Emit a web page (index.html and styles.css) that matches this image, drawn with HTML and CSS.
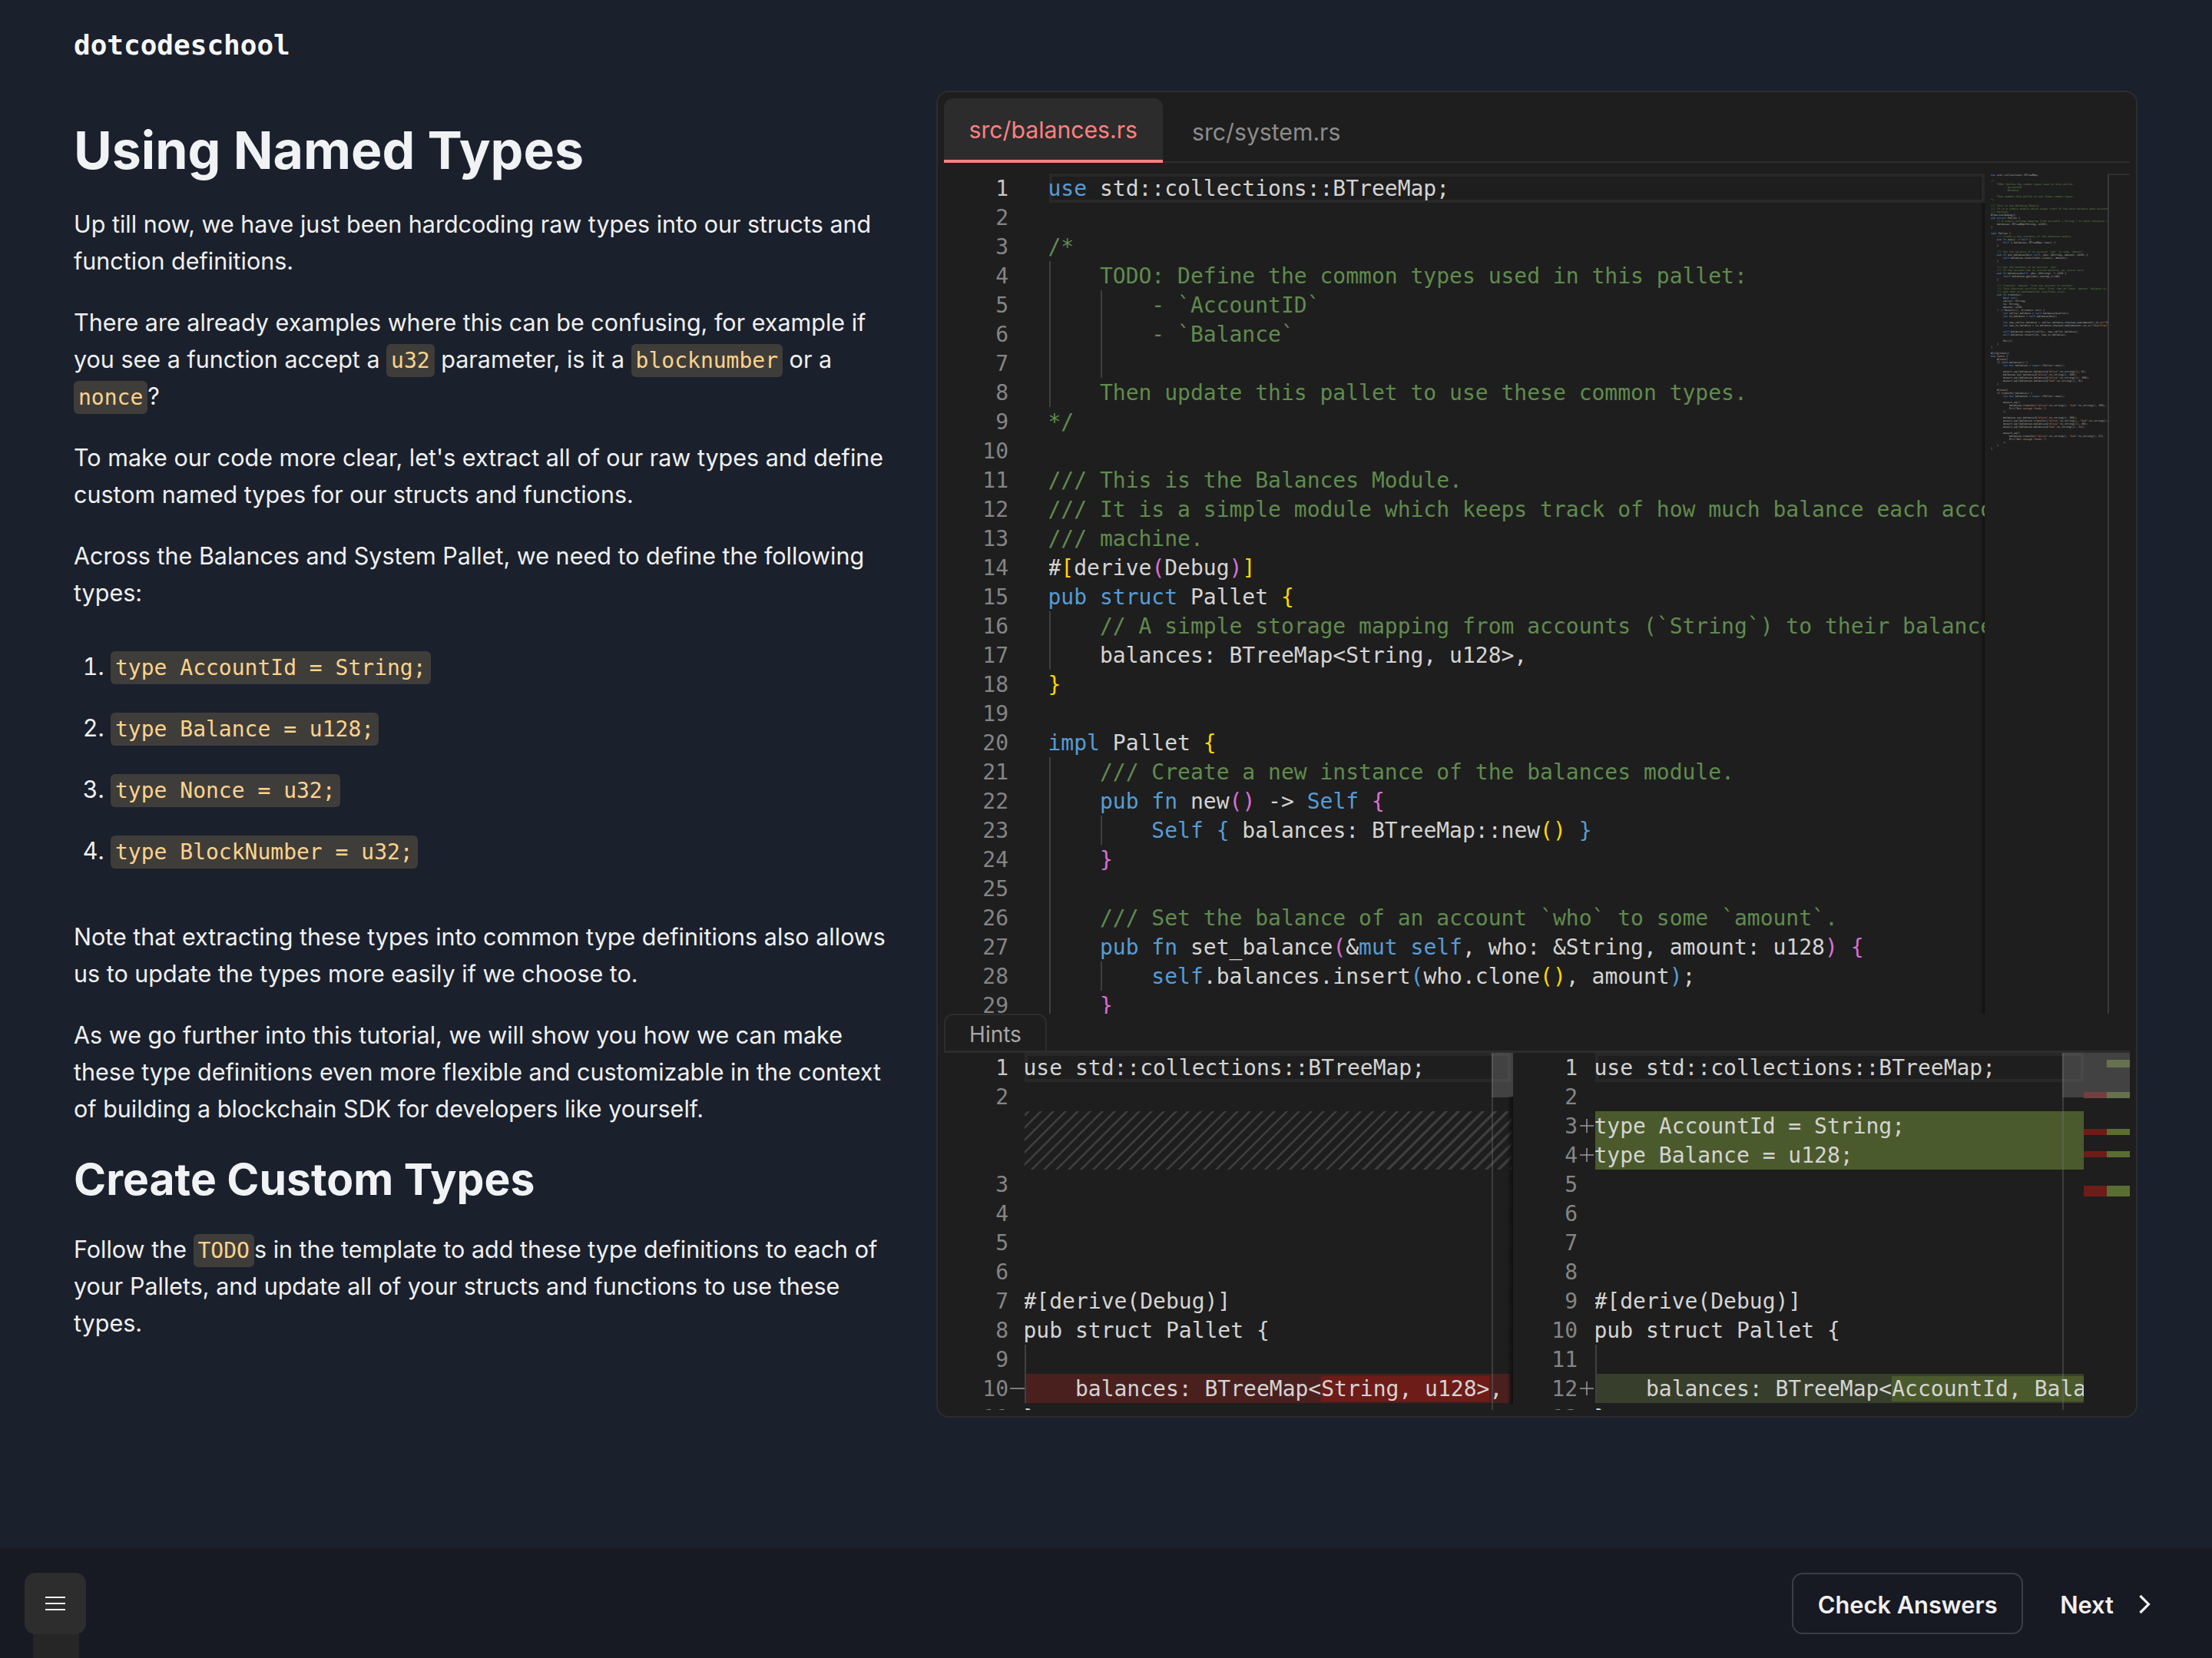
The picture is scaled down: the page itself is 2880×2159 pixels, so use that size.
FILE: index.html
```html
<!DOCTYPE html>
<html lang="en">
<head>
<meta charset="utf-8">
<title>Using Named Types</title>
<link rel="stylesheet" href="styles.css">
</head>
<body>
<div class="page">
  <main class="main">
    <article class="lesson">
      <div class="logo">dotcodeschool</div>
      <h1>Using Named Types</h1>
      <p>Up till now, we have just been hardcoding raw types into our structs and function definitions.</p>
      <p>There are already examples where this can be confusing, for example if you see a function accept a <code>u32</code> parameter, is it a <code>blocknumber</code> or a <code>nonce</code>?</p>
      <p>To make our code more clear, let's extract all of our raw types and define custom named types for our structs and functions.</p>
      <p>Across the Balances and System Pallet, we need to define the following types:</p>
      <ol>
        <li><code>type AccountId = String;</code></li>
        <li><code>type Balance = u128;</code></li>
        <li><code>type Nonce = u32;</code></li>
        <li><code>type BlockNumber = u32;</code></li>
      </ol>
      <p>Note that extracting these types into common type definitions also allows us to update the types more easily if we choose to.</p>
      <p>As we go further into this tutorial, we will show you how we can make these type definitions even more flexible and customizable in the context of building a blockchain SDK for developers like yourself.</p>
      <h2>Create Custom Types</h2>
      <p>Follow the <code>TODO</code>s in the template to add these type definitions to each of your Pallets, and update all of your structs and functions to use these types.</p>
    </article>

    <section class="panel">
      <div class="tabs">
        <div class="tab active">src/balances.rs</div>
        <div class="tab">src/system.rs</div>
      </div>
      <div class="editor">
        <div class="lines">
          <div class="ln current"><span class="num">1</span><span class="code"><i class="k">use</i> std::collections::BTreeMap;</span></div>
          <div class="ln"><span class="num">2</span><span class="code"></span></div>
          <div class="ln"><span class="num">3</span><span class="code c">/*</span></div>
          <div class="ln"><span class="num">4</span><span class="code c g1">    TODO: Define the common types used in this pallet:</span></div>
          <div class="ln"><span class="num">5</span><span class="code c g12">        - `AccountID`</span></div>
          <div class="ln"><span class="num">6</span><span class="code c g12">        - `Balance`</span></div>
          <div class="ln"><span class="num">7</span><span class="code c g12"></span></div>
          <div class="ln"><span class="num">8</span><span class="code c g1">    Then update this pallet to use these common types.</span></div>
          <div class="ln"><span class="num">9</span><span class="code c">*/</span></div>
          <div class="ln"><span class="num">10</span><span class="code"></span></div>
          <div class="ln"><span class="num">11</span><span class="code c">/// This is the Balances Module.</span></div>
          <div class="ln"><span class="num">12</span><span class="code c">/// It is a simple module which keeps track of how much balance each account has in this state</span></div>
          <div class="ln"><span class="num">13</span><span class="code c">/// machine.</span></div>
          <div class="ln"><span class="num">14</span><span class="code">#<i class="y">[</i>derive<i class="p">(</i>Debug<i class="p">)</i><i class="y">]</i></span></div>
          <div class="ln"><span class="num">15</span><span class="code"><i class="k">pub struct</i> Pallet <i class="y">{</i></span></div>
          <div class="ln"><span class="num">16</span><span class="code c g1">    // A simple storage mapping from accounts (`String`) to their balances (`u128`).</span></div>
          <div class="ln"><span class="num">17</span><span class="code g1">    balances: BTreeMap&lt;String, u128&gt;,</span></div>
          <div class="ln"><span class="num">18</span><span class="code"><i class="y">}</i></span></div>
          <div class="ln"><span class="num">19</span><span class="code"></span></div>
          <div class="ln"><span class="num">20</span><span class="code"><i class="k">impl</i> Pallet <i class="y">{</i></span></div>
          <div class="ln"><span class="num">21</span><span class="code c g1">    /// Create a new instance of the balances module.</span></div>
          <div class="ln"><span class="num">22</span><span class="code g1">    <i class="k">pub fn</i> new<i class="p">()</i> -&gt; <i class="k">Self</i> <i class="p">{</i></span></div>
          <div class="ln"><span class="num">23</span><span class="code g12">        <i class="k">Self</i> <i class="b">{</i> balances: BTreeMap::new<i class="y">()</i> <i class="b">}</i></span></div>
          <div class="ln"><span class="num">24</span><span class="code g1">    <i class="p">}</i></span></div>
          <div class="ln"><span class="num">25</span><span class="code g1"></span></div>
          <div class="ln"><span class="num">26</span><span class="code c g1">    /// Set the balance of an account `who` to some `amount`.</span></div>
          <div class="ln"><span class="num">27</span><span class="code g1">    <i class="k">pub fn</i> set_balance<i class="p">(</i>&amp;<i class="k">mut self</i>, who: &amp;String, amount: u128<i class="p">)</i> <i class="p">{</i></span></div>
          <div class="ln"><span class="num">28</span><span class="code g12">        <i class="k">self</i>.balances.insert<i class="b">(</i>who.clone<i class="y">()</i>, amount<i class="b">)</i>;</span></div>
          <div class="ln"><span class="num">29</span><span class="code g1">    <i class="p">}</i></span></div>
        </div>
        <pre class="minimap"><i class="k">use</i> std::collections::BTreeMap;

<i class="c">/*
    TODO: Define the common types used in this pallet:
        - `AccountID`
        - `Balance`

    Then update this pallet to use these common types.
*/

/// This is the Balances Module.
/// It is a simple module which keeps track of how much balance each account has in this state
/// machine.</i>
#[derive(Debug)]
<i class="k">pub struct</i> Pallet {
    <i class="c">// A simple storage mapping from accounts (`String`) to their balances (`u128`).</i>
    balances: BTreeMap&lt;String, u128&gt;,
}

<i class="k">impl</i> Pallet {
    <i class="c">/// Create a new instance of the balances module.</i>
    <i class="k">pub fn</i> new() -&gt; <i class="k">Self</i> {
        <i class="k">Self</i> { balances: BTreeMap::new() }
    }

    <i class="c">/// Set the balance of an account `who` to some `amount`.</i>
    <i class="k">pub fn</i> set_balance(&amp;<i class="k">mut self</i>, who: &amp;String, amount: u128) {
        <i class="k">self</i>.balances.insert(who.clone(), amount);
    }

    <i class="c">/// Get the balance of an account `who`.
    /// If the account has no stored balance, we return zero.</i>
    <i class="k">pub fn</i> balance(&amp;<i class="k">self</i>, who: &amp;String) -&gt; u128 {
        *<i class="k">self</i>.balances.get(who).unwrap_or(&amp;0)
    }

    <i class="c">/// Transfer `amount` from one account to another.
    /// This function verifies that `from` has at least `amount` balance to transfer,
    /// and that no mathematical overflows occur.</i>
    <i class="k">pub fn</i> transfer(
        &amp;<i class="k">mut self</i>,
        caller: String,
        to: String,
        amount: u128,
    ) -&gt; Result&lt;(), &amp;'static str&gt; {
        <i class="k">let</i> caller_balance = <i class="k">self</i>.balance(&amp;caller);
        <i class="k">let</i> to_balance = <i class="k">self</i>.balance(&amp;to);

        <i class="k">let</i> new_caller_balance = caller_balance.checked_sub(amount).ok_or(<i class="s">"Not enough funds."</i>)?;
        <i class="k">let</i> new_to_balance = to_balance.checked_add(amount).ok_or(<i class="s">"Overflow"</i>)?;

        <i class="k">self</i>.balances.insert(caller, new_caller_balance);
        <i class="k">self</i>.balances.insert(to, new_to_balance);

        Ok(())
    }
}

#[cfg(test)]
<i class="k">mod</i> tests {
    #[test]
    <i class="k">fn</i> init_balances() {
        <i class="k">let mut</i> balances = <i class="k">super</i>::Pallet::new();

        assert_eq!(balances.balance(&amp;<i class="s">"alice"</i>.to_string()), 0);
        balances.set_balance(&amp;<i class="s">"alice"</i>.to_string(), 100);
        assert_eq!(balances.balance(&amp;<i class="s">"alice"</i>.to_string()), 100);
        assert_eq!(balances.balance(&amp;<i class="s">"bob"</i>.to_string()), 0);
    }

    #[test]
    <i class="k">fn</i> transfer_balance() {
        <i class="k">let mut</i> balances = <i class="k">super</i>::Pallet::new();

        assert_eq!(
            balances.transfer(<i class="s">"alice"</i>.to_string(), <i class="s">"bob"</i>.to_string(), 100),
            Err(<i class="s">"Not enough funds."</i>)
        );

        balances.set_balance(&amp;<i class="s">"alice"</i>.to_string(), 100);
        assert_eq!(balances.transfer(<i class="s">"alice"</i>.to_string(), <i class="s">"bob"</i>.to_string(), 51), Ok(()));
        assert_eq!(balances.balance(&amp;<i class="s">"alice"</i>.to_string()), 49);
        assert_eq!(balances.balance(&amp;<i class="s">"bob"</i>.to_string()), 51);

        assert_eq!(
            balances.transfer(<i class="s">"alice"</i>.to_string(), <i class="s">"bob"</i>.to_string(), 51),
            Err(<i class="s">"Not enough funds."</i>)
        );
    }
}</pre>
        <div class="ruler"></div>
      </div>

      <div class="hints-bar"><div class="hints-tab">Hints</div></div>

      <div class="diff">
        <div class="pane pane-left">
          <div class="ln current"><span class="num">1</span><span class="sign"></span><span class="code">use std::collections::BTreeMap;</span></div>
          <div class="ln"><span class="num">2</span><span class="sign"></span><span class="code"></span></div>
          <div class="hatch"></div>
          <div class="ln"><span class="num">3</span><span class="sign"></span><span class="code"></span></div>
          <div class="ln"><span class="num">4</span><span class="sign"></span><span class="code"></span></div>
          <div class="ln"><span class="num">5</span><span class="sign"></span><span class="code"></span></div>
          <div class="ln"><span class="num">6</span><span class="sign"></span><span class="code"></span></div>
          <div class="ln"><span class="num">7</span><span class="sign"></span><span class="code">#[derive(Debug)]</span></div>
          <div class="ln"><span class="num">8</span><span class="sign"></span><span class="code">pub struct Pallet {</span></div>
          <div class="ln"><span class="num">9</span><span class="sign"></span><span class="code g1"></span></div>
          <div class="ln"><span class="num">10</span><span class="sign"><svg viewBox="0 0 22 22" class="mark"><path d="M2 11H22"/></svg></span><span class="code del g1">    balances: BTreeMap&lt;<b class="del-w">String, u128&gt;</b>,</span></div>
          <div class="ln"><span class="num">11</span><span class="sign"></span><span class="code">}</span></div>
          <div class="slider"></div>
          <div class="edge"></div>
        </div>
        <div class="pane pane-right">
          <div class="ln current"><span class="num">1</span><span class="sign"></span><span class="code">use std::collections::BTreeMap;</span></div>
          <div class="ln"><span class="num">2</span><span class="sign"></span><span class="code"></span></div>
          <div class="ln"><span class="num">3</span><span class="sign"><svg viewBox="0 0 22 22" class="mark"><path d="M2 11H20M11 2V20"/></svg></span><span class="code add">type AccountId = String;</span></div>
          <div class="ln"><span class="num">4</span><span class="sign"><svg viewBox="0 0 22 22" class="mark"><path d="M2 11H20M11 2V20"/></svg></span><span class="code add">type Balance = u128;</span></div>
          <div class="ln"><span class="num">5</span><span class="sign"></span><span class="code"></span></div>
          <div class="ln"><span class="num">6</span><span class="sign"></span><span class="code"></span></div>
          <div class="ln"><span class="num">7</span><span class="sign"></span><span class="code"></span></div>
          <div class="ln"><span class="num">8</span><span class="sign"></span><span class="code"></span></div>
          <div class="ln"><span class="num">9</span><span class="sign"></span><span class="code">#[derive(Debug)]</span></div>
          <div class="ln"><span class="num">10</span><span class="sign"></span><span class="code">pub struct Pallet {</span></div>
          <div class="ln"><span class="num">11</span><span class="sign"></span><span class="code g1"></span></div>
          <div class="ln"><span class="num">12</span><span class="sign"><svg viewBox="0 0 22 22" class="mark"><path d="M2 11H20M11 2V20"/></svg></span><span class="code ins g1">    balances: BTreeMap&lt;<b class="ins-w">AccountId, Balance&gt;,</b></span></div>
          <div class="ln"><span class="num">13</span><span class="sign"></span><span class="code">}</span></div>
          <div class="slider"></div>
          <div class="edge"></div>
        </div>
        <div class="overview">
          <div class="ov ov-g ov-a"></div>
          <div class="ov ov-r ov-b"></div><div class="ov ov-g ov-b"></div>
          <div class="ov ov-r ov-c"></div><div class="ov ov-g ov-c"></div>
          <div class="ov ov-r ov-d"></div><div class="ov ov-g ov-d"></div>
          <div class="ov ov-r ov-e"></div><div class="ov ov-g ov-e"></div>
          <div class="ov-slider"></div>
        </div>
      </div>
    </section>
  </main>

  <footer class="footer">
    <div class="footer-left">
      <button class="menu" aria-label="Menu">
        <svg viewBox="0 0 26 18" width="26" height="18"><path d="M0 1H26M0 9H26M0 17H26"/></svg>
      </button>
      <div class="menu-stub"></div>
    </div>
    <div class="footer-right">
      <button class="check">Check Answers</button>
      <button class="next">Next
        <svg viewBox="0 0 16 26" width="16" height="26"><path d="M2.5 2L13.5 13L2.5 24"/></svg>
      </button>
    </div>
  </footer>
</div>
</body>
</html>
```
FILE: styles.css
```css
* { box-sizing: border-box; }
html, body { margin: 0; padding: 0; }
body {
  background: #1a202c;
  color: #f0f0f0;
  font-family: Inter, "Noto Sans", sans-serif;
  font-size: 30.5px;
  line-height: 48px;
}
.page { height: 2159px; display: flex; flex-direction: column; overflow: hidden; }
.main { flex: 1; display: flex; gap: 53px; padding: 0 96px 0 96px; min-height: 0; }

.lesson { width: 1070px; flex: none; }
.logo {
  font-family: "DejaVu Sans Mono", monospace;
  font-weight: 700;
  font-size: 36px;
  line-height: 48px;
  padding-top: 35px;
  height: 118px;
  color: #f7f7f7;
}
h1 {
  margin: 35px 0 31px;
  font-size: 68px;
  line-height: 84px;
  font-weight: 700;
  color: #f0f2f4;
}
h2 {
  margin: 30px 0 31px;
  font-size: 57px;
  line-height: 72px;
  font-weight: 700;
  color: #f0f2f4;
}
p { margin: 0 0 32px; }
code {
  font-family: "DejaVu Sans Mono", monospace;
  font-size: 28px;
  line-height: 42px;
  color: #fbd38d;
  background: #3f3d3a;
  padding: 5px 6px;
  border-radius: 6px;
}
ol { margin: 48px 0 64px; padding: 0 0 0 48px; }
li { margin-bottom: 32px; }
li:last-child { margin-bottom: 0; }
li::marker { color: #f0f0f0; }

.panel {
  flex: none;
  width: 1564px;
  height: 1728px;
  margin-top: 118px;
  padding: 8px;
  background: #1e1e1e;
  border: 2px solid #2b2d30;
  border-radius: 16px;
  display: flex;
  flex-direction: column;
  overflow: hidden;
}
.tabs { display: flex; gap: 6px; height: 84px; flex: none; border-bottom: 2px solid #2d2d2d; }
.tab {
  font-size: 30.2px;
  line-height: 88px;
  color: #8c8c8c;
  padding: 0 32.5px;
  white-space: nowrap;
}
.tab.active {
  color: #fc8181;
  background: #2c2c2c;
  border-radius: 12px 12px 0 0;
  border-bottom: 4px solid #fc8181;
  height: 84px;
  line-height: 82px;
}

.editor { height: 1094px; flex: none; margin-top: 14px; display: flex; overflow: hidden; }
.lines { flex: 1; min-width: 0; overflow: hidden; position: relative; box-shadow: inset -6px 0 6px -6px #000; }
.ln {
  display: flex;
  height: 38px;
  font-family: "DejaVu Sans Mono", monospace;
  font-size: 28px;
  line-height: 39px;
  color: #d4d4d4;
  white-space: pre;
}
.num { flex: none; width: 84px; text-align: right; color: #858585; }
.code { flex: 1; min-width: 0; margin-left: 53px; white-space: pre; overflow: hidden; text-indent: -1.5px; }
.current .num { color: #c6c6c6; }
.current .code { box-shadow: inset 0 0 0 4px #282828; }
.code i, .minimap i { font-style: normal; }
.k { color: #569cd6; }
.c, .code .c { color: #608b4e; }
.y { color: #ffd700; }
.p { color: #da70d6; }
.b { color: #569cd6; }
.s { color: #ce9178; }
.g1 { background: linear-gradient(#404040, #404040) 0 0 / 2px 100% no-repeat; }
.g12 {
  background:
    linear-gradient(#404040, #404040) 0 0 / 2px 100% no-repeat,
    linear-gradient(#404040, #404040) 67.4px 0 / 2px 100% no-repeat;
}
.minimap {
  flex: none;
  width: 160px;
  margin: 0;
  padding: 0 0 0 8px;
  font-family: "DejaVu Sans Mono", monospace;
  font-size: 3.33px;
  line-height: 4px;
  color: #b8b8b8;
  overflow: hidden;
  white-space: pre;
}
.ruler { flex: none; width: 29px; border-left: 2px solid #3a3a3a; border-top: 2px solid #2f2f2f; }

.hints-bar { height: 51px; flex: none; margin-top: 0; border-bottom: 3px solid #2d2d2d; }
.hints-tab {
  width: 134px;
  height: 48px;
  border: 2px solid #2d2d2d;
  border-bottom: 0;
  border-radius: 12px 12px 0 0;
  font-size: 28px;
  line-height: 50px;
  text-align: center;
  color: #a8a8a8;
}

.diff { flex: 1; min-height: 0; display: flex; overflow: hidden; }
.pane { position: relative; flex: none; overflow: hidden; }
.pane-left { width: 741px; margin-right: 2px; }
.pane-left::after {
  content: "";
  position: absolute;
  right: 0;
  top: 57px;
  bottom: 8px;
  width: 8px;
  background: linear-gradient(to right, rgba(12, 12, 12, 0), #0f0f0f);
}
.pane-left .code { margin-right: 3px; }
.pane-right { width: 741px; }
.pane .code { margin-left: 0; }
.pane .num { width: 82px; }
.pane-left .num { width: 84px; }
.pane .sign { flex: none; width: 23px; height: 38px; display: flex; align-items: center; justify-content: center; }
.pane-left .sign { width: 21px; }
.mark { width: 22px; height: 22px; flex: none; fill: none; stroke: #9a9a9a; stroke-width: 1.5; }
.hatch {
  height: 76px;
  margin: 0 1px 0 105px;
  background: repeating-linear-gradient(-45deg, #3c3c3c 0, #3c3c3c 3px, transparent 3px, transparent 11.3px);
}
.del { background-color: #4a201e; }
.del-w { background: #6e1c18; font-weight: 400; }
.add { background: #4b5a2c; }
.ins { background-color: #373f2c; }
.ins-w { background: #4b5a2c; font-weight: 400; }
.slider {
  position: absolute;
  right: 0;
  top: 0;
  width: 28px;
  height: 58px;
  background: rgba(121, 121, 121, 0.4);
}
.edge {
  position: absolute;
  right: 26px;
  top: 0;
  bottom: 0;
  width: 2px;
  background: rgba(121, 121, 121, 0.35);
}
.overview { position: relative; flex: 1; min-width: 0; background: #1e1e1e; }
.ov-slider { position: absolute; left: 0; right: 0; top: 0; height: 59px; background: rgba(121, 121, 121, 0.4); }
.ov { position: absolute; width: 30px; }
.ov-g { right: 0; background: #5a6e32; }
.ov-r { left: 0; background: #6e1c18; }
.ov-a { top: 9px; height: 10px; }
.ov-b { top: 51px; height: 8px; }
.ov-c { top: 99px; height: 8px; }
.ov-d { top: 128px; height: 8px; }
.ov-e { top: 173px; height: 14px; }

.footer {
  flex: none;
  height: 143px;
  background: #171923;
  display: flex;
  align-items: flex-start;
  justify-content: space-between;
  padding: 32px 80px 0 32px;
}
.footer-left { position: relative; }
.menu {
  display: flex;
  align-items: center;
  justify-content: center;
  width: 80px;
  height: 80px;
  padding: 0;
  background: #2d2d2d;
  border: 0;
  border-radius: 14px;
}
.menu svg path, .next svg path { fill: none; stroke: #f0f0f0; }
.menu svg path { stroke-width: 2; }
.next svg path { stroke-width: 3.2; }
.menu-stub { position: absolute; left: 11px; top: 80px; width: 60px; height: 40px; background: #262626; }
.footer-right { display: flex; align-items: center; gap: 48px; }
.check, .next {
  font-family: Inter, sans-serif;
  font-size: 30.8px;
  font-weight: 600;
  color: #f0f0f0;
  background: none;
}
.check { width: 301px; height: 80px; border: 2px solid #3a3d47; border-radius: 14px; padding: 2px 0 0; }
.next { display: flex; align-items: center; gap: 32px; border: 0; padding: 2px 0 0; height: 80px; }
```
